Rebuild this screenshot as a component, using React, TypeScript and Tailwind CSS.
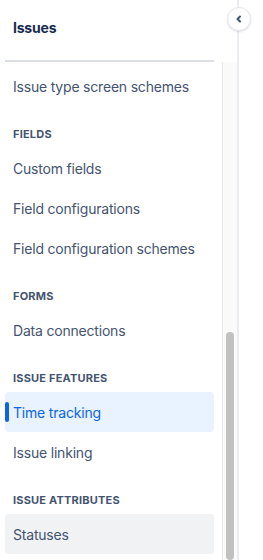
import React from 'react';

type Section = {
  title?: string;
  items: string[];
};

const sections: Section[] = [
  { items: ['Issue type screen schemes'] },
  { title: 'Fields', items: ['Custom fields', 'Field configurations', 'Field configuration schemes'] },
  { title: 'Forms', items: ['Data connections'] },
  { title: 'Issue features', items: ['Time tracking', 'Issue linking'] },
  { title: 'Issue attributes', items: ['Statuses'] },
];

const ACTIVE = 'Time tracking';
const HOVER = 'Statuses';

function NavItem({ label }: { label: string }) {
  const active = label === ACTIVE;
  const hover = label === HOVER;
  return (
    <div
      className={
        'relative flex h-10 shrink-0 items-center rounded px-2 text-[14px] tracking-[-0.2px] ' +
        (active
          ? 'bg-[#e9f2ff] text-[#0c66e4]'
          : hover
            ? 'bg-[#f1f2f4] text-[#44546f]'
            : 'text-[#44546f]')
      }
    >
      {active && <span className="absolute left-0 top-[10px] h-5 w-1 rounded-full bg-[#0c66e4]" />}
      {label}
    </div>
  );
}

export default function App() {
  return (
    <div
      className="relative flex h-[560px] w-[263px] overflow-hidden bg-white"
      style={{ fontFamily: 'Inter, "Noto Sans", sans-serif' }}
    >
      <div className="flex w-[239px] shrink-0 flex-col border-r-2 border-[#ebecf0]">
        {/* header */}
        <div className="flex h-[54px] shrink-0 items-center pl-[13px] text-[14px] font-bold tracking-[-0.2px] text-[#172b4d]">
          Issues
        </div>
        <div className="mx-[5px] mt-[6px] h-[2px] w-[209px] shrink-0 bg-[#dcdfe4]" />

        <div className="flex min-h-0 flex-1">
          {/* nav list */}
          <div className="flex w-[222px] shrink-0 flex-col overflow-hidden pl-[5px] pr-[8px] pt-[4px]">
            {sections.map((s, i) => (
              <div key={i} className="flex flex-col">
                {s.title && (
                  <div className="mb-1.5 mt-5 flex h-4 items-center px-2 text-[11px] font-bold uppercase tracking-[0.2px] text-[#44546f]">
                    {s.title}
                  </div>
                )}
                {s.items.map((it) => (
                  <NavItem key={it} label={it} />
                ))}
              </div>
            ))}
          </div>

          {/* scrollbar */}
          <div className="flex w-[15px] shrink-0 flex-col border-l border-[#e8e8e8] bg-[#fafafa]">
            <div className="h-[270px] shrink-0" />
            <div className="ml-[3px] w-2 flex-1 rounded-full bg-[#c1c1c1]" />
          </div>
        </div>
      </div>

      {/* collapse button */}
      <button className="absolute left-[227px] top-[7px] flex h-6 w-6 items-center justify-center rounded-full border border-[#e4e6ea] bg-white shadow-[0_1px_2px_rgba(9,30,66,0.12)]">
        <svg width="12" height="12" viewBox="0 0 12 12" fill="none">
          <path d="M7 3.5 4.5 6 7 8.5" stroke="#44546f" strokeWidth="2" strokeLinecap="round" strokeLinejoin="round" />
        </svg>
      </button>
    </div>
  );
}
